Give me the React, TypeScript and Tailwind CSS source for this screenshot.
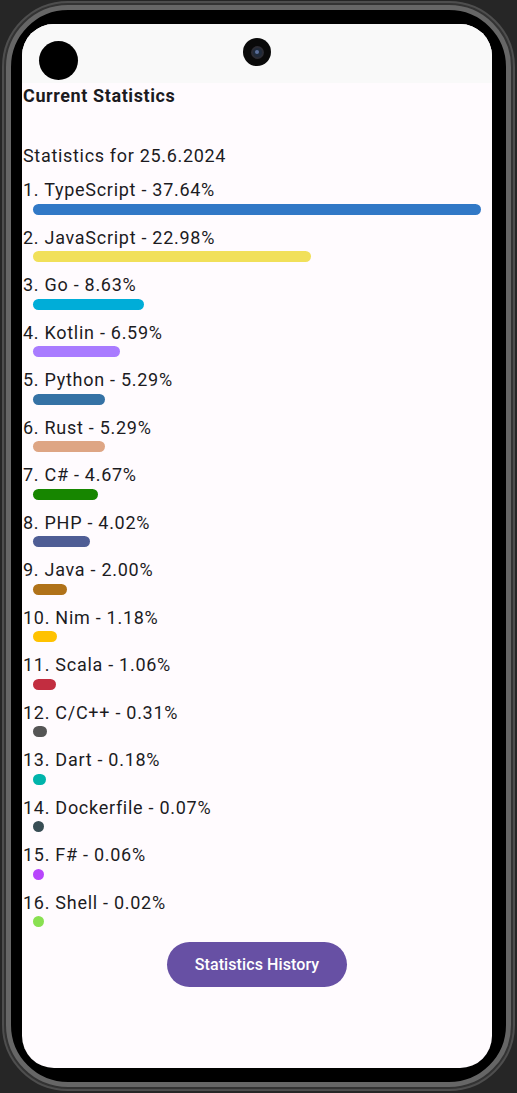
import React from 'react';

type Lang = { name: string; pct: number; color: string };

const langs: Lang[] = [
  { name: 'TypeScript', pct: 37.64, color: '#3178c6' },
  { name: 'JavaScript', pct: 22.98, color: '#f1e05a' },
  { name: 'Go', pct: 8.63, color: '#00add8' },
  { name: 'Kotlin', pct: 6.59, color: '#a97bff' },
  { name: 'Python', pct: 5.29, color: '#3572a5' },
  { name: 'Rust', pct: 5.29, color: '#dea584' },
  { name: 'C#', pct: 4.67, color: '#178600' },
  { name: 'PHP', pct: 4.02, color: '#4f5d95' },
  { name: 'Java', pct: 2.0, color: '#b07219' },
  { name: 'Nim', pct: 1.18, color: '#ffc200' },
  { name: 'Scala', pct: 1.06, color: '#c22d40' },
  { name: 'C/C++', pct: 0.31, color: '#555555' },
  { name: 'Dart', pct: 0.18, color: '#00b4ab' },
  { name: 'Dockerfile', pct: 0.07, color: '#384d54' },
  { name: 'F#', pct: 0.06, color: '#b845fc' },
  { name: 'Shell', pct: 0.02, color: '#89e051' },
];

const maxPct = langs[0].pct;

function StatRow({ lang, index }: { lang: Lang; index: number }) {
  // bar = dot + share of remaining track
  const width = 10.5 + (lang.pct / maxPct) * 437.5;
  return (
    <div className="flex flex-col h-[47.5px]">
      <div className="text-[18px] leading-[24px] tracking-[0.72px]">
        {index + 1}. {lang.name} - {lang.pct.toFixed(2)}%
      </div>
      <div
        className="mt-[1.5px] ml-[10px] h-[11px] rounded-full"
        style={{ width: `${width}px`, backgroundColor: lang.color }}
      />
    </div>
  );
}

export default function App() {
  return (
    <div
      className="w-[517px] h-[1093px] bg-[#262626] pt-[1px] pl-[2px]"
      style={{ fontFamily: 'Roboto, "Noto Sans", sans-serif' }}
    >
      {/* phone body */}
      <div className="w-[513px] h-[1090px] rounded-[66px] border-[2px] border-[#4e4e4e] bg-[#333] p-[2px]">
        <div className="w-full h-full rounded-[62px] border-[5px] border-[#666] bg-black pt-[14px] pl-[11px]">
          {/* screen */}
          <div className="relative w-[470px] h-[1044px] rounded-[32px] overflow-hidden bg-[#fffbfe] text-[#1c1b1f] flex flex-col">
            {/* status bar */}
            <div className="h-[59px] bg-[#f9f9f9] relative shrink-0">
              <div className="absolute left-[17px] top-[17px] w-[39px] h-[39px] rounded-full bg-black" />
              <div className="absolute left-[221px] top-[14px] w-[28px] h-[28px] rounded-full bg-[#0a0a0a] flex items-center justify-center">
                <div className="w-[13px] h-[13px] rounded-full bg-[#1f2a3a] border-[2px] border-[#2c2c34] flex items-center justify-center">
                  <div className="w-[4px] h-[4px] rounded-full bg-[#5b6f9a]" />
                </div>
              </div>
            </div>

            <div className="pl-[1px] pt-[1px] flex flex-col">
              <div className="text-[18px] leading-[24px] font-bold tracking-[0.6px]">Current Statistics</div>
              <div className="mt-[36px] text-[18px] leading-[24px] tracking-[0.68px]">Statistics for 25.6.2024</div>
              <div className="mt-[10px] flex flex-col">
                {langs.map((l, i) => (
                  <StatRow key={l.name} lang={l} index={i} />
                ))}
              </div>
              <div className="flex justify-center mt-[4px]">
                <button className="ml-[-1px] w-[180px] h-[45px] rounded-full bg-[#6750a4] text-white text-[16px] font-medium tracking-[0.1px]">
                  Statistics History
                </button>
              </div>
            </div>
          </div>
        </div>
      </div>
    </div>
  );
}
